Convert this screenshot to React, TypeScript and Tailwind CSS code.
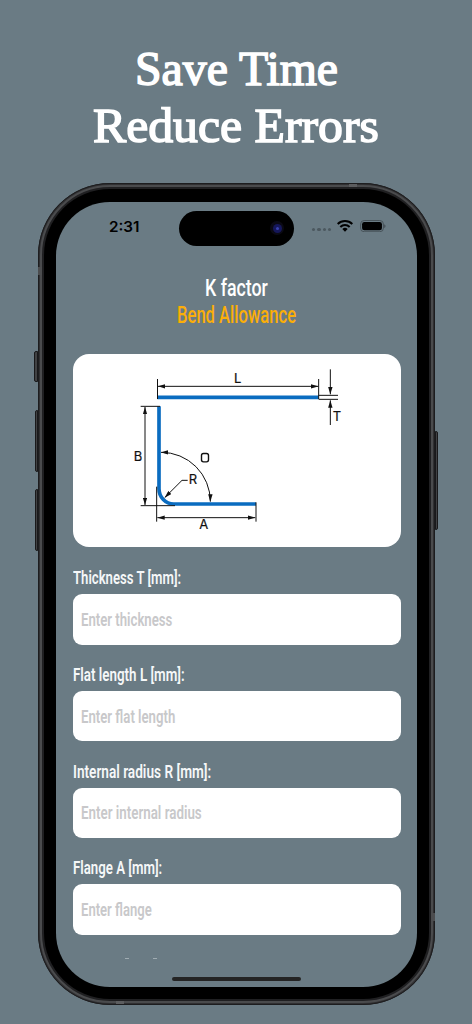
import React, { useLayoutEffect, useRef, useState } from 'react';

// Stretches or squeezes one line of text horizontally to the given width
const FitText: React.FC<{ width: number; className?: string; children: string }> = ({ width, className = '', children }) => {
    const ref = useRef<HTMLSpanElement>(null);
    const [scale, setScale] = useState(1);

    useLayoutEffect(() => {
        if (ref.current) setScale(width / ref.current.offsetWidth);
    }, [width, children]);

    return (
        <span className="block" style={{ width }}>
            <span ref={ref} className={`inline-block origin-left whitespace-nowrap ${className}`} style={{ transform: `scaleX(${scale})` }}>
                {children}
            </span>
        </span>
    );
};

const fields = [
    { label: 'Thickness T [mm]:', labelWidth: 108, placeholder: 'Enter thickness', placeholderWidth: 91.5 },
    { label: 'Flat length L [mm]:', labelWidth: 111.5, placeholder: 'Enter flat length', placeholderWidth: 94.5 },
    { label: 'Internal radius R [mm]:', labelWidth: 138.5, placeholder: 'Enter internal radius', placeholderWidth: 121 },
    { label: 'Flange A [mm]:', labelWidth: 89, placeholder: 'Enter flange', placeholderWidth: 70.5 },
];

const Field: React.FC<{ field: (typeof fields)[number] }> = ({ field }) => (
    <div className="h-[96.8px] shrink-0">
        <div className="h-[30px] pt-px text-[18px] leading-[26px] font-semibold text-[#f5f7f8]">
            <FitText width={field.labelWidth}>{field.label}</FitText>
        </div>
        <div className="flex h-[50.5px] items-center rounded-[9px] bg-white pl-[8.5px] text-[18px] font-semibold text-[#c8c8ca]">
            <FitText width={field.placeholderWidth}>{field.placeholder}</FitText>
        </div>
    </div>
);

const StatusBar: React.FC = () => (
    <div className="flex h-[54px] items-start pt-[9px]">
        <div className="ml-[52.500px] mt-[6px] w-[70.500px] font-['Inter',sans-serif] text-[15px] leading-5 font-semibold text-black">
            <FitText width={30.5}>2:31</FitText>
        </div>
        <div className="flex h-[35px] w-[115px] items-center justify-end rounded-full bg-black pr-[10px]">
            <div className="flex size-[14px] items-center justify-center rounded-full bg-[#0b0a14]">
                <div className="flex size-[9px] items-center justify-center rounded-full bg-[#15175a]">
                    <div className="size-[3px] rounded-full bg-[#3a41b0]" />
                </div>
            </div>
        </div>
        <div className="ml-[18px] mt-[17.500px] flex gap-[2px]">
            <div className="size-[3.3px] rounded-full bg-[#4c585f]" />
            <div className="size-[3.3px] rounded-full bg-[#4c585f]" />
            <div className="size-[3.3px] rounded-full bg-[#4c585f]" />
            <div className="size-[3.3px] rounded-full bg-[#4c585f]" />
        </div>
        <svg viewBox="0 0 48 36" className="ml-[6px] mt-[9px] h-[12px] w-[16px]">
            <path d="M2 12a32 32 0 0 1 44 0" fill="none" stroke="#000" strokeWidth="6" />
            <path d="M10 21a20 20 0 0 1 28 0" fill="none" stroke="#000" strokeWidth="6" />
            <path d="M16 27a12 12 0 0 1 16 0l-8 8z" fill="#000" />
        </svg>
        <svg viewBox="0 0 78 38" className="ml-[6.500px] mt-[9px] h-[12.6px] w-[26px]">
            <rect x="1.5" y="1.5" width="69" height="34" rx="11" fill="none" stroke="#414b51" strokeWidth="2.5" />
            <rect x="6" y="6" width="60" height="25" rx="7" fill="#000" />
            <path d="M73 13c5 2 5 9 0 11z" fill="#414b51" />
        </svg>
    </div>
);

const BendDiagram: React.FC = () => (
    <svg viewBox="0 0 720 540" className="ml-[47.500px] mt-[6px] h-[180px] w-[240px]" fill="none">
        <defs>
            <marker id="arrow" viewBox="0 0 20 12" refX="20" refY="6" markerWidth="22" markerHeight="14" markerUnits="userSpaceOnUse" orient="auto-start-reverse">
                <path d="M0 0l20 6l-20 6z" fill="#111" />
            </marker>
        </defs>
        <g stroke="#0a6cc0" strokeWidth="11">
            <path d="M112 112H596" />
            <path d="M117 139V386A44 46 0 0 0 161 432H408" />
        </g>
        <g stroke="#111" strokeWidth="3">
            <path d="M112.500 57V117M596 57V117" />
            <path d="M114 79H595" markerStart="url(#arrow)" markerEnd="url(#arrow)" />
            <path d="M596 106H654M596 118H654" />
            <path d="M631 195V121" markerEnd="url(#arrow)" />
            <path d="M631 28V103" markerEnd="url(#arrow)" />
            <path d="M62 139H120M62 437H165" />
            <path d="M75 141V435" markerStart="url(#arrow)" markerEnd="url(#arrow)" />
            <path d="M110 380V485M408 427V485" />
            <path d="M112 473H406" markerStart="url(#arrow)" markerEnd="url(#arrow)" />
            <path d="M123 277A147 147 0 0 1 271 425" markerStart="url(#arrow)" markerEnd="url(#arrow)" />
            <path d="M203 361H186L134 413" markerEnd="url(#arrow)" />
        </g>
        <g fill="#111" stroke="#111" strokeWidth="0.6" className="font-['Inter',sans-serif] text-[39px]" textAnchor="middle">
            <text x="353" y="69">L</text>
            <text x="651" y="183">T</text>
            <text x="54" y="302">B</text>
            <text x="219" y="373">R</text>
            <text x="251" y="508">A</text>
        </g>
        {/* angle symbol: a squarish O */}
        <rect x="244.500" y="280.500" width="21" height="25" rx="6" stroke="#111" strokeWidth="4.2" />
    </svg>
);

const Screen: React.FC = () => (
    <div className="flex h-[785px] w-[361px] flex-col overflow-hidden rounded-[54px] bg-[#6a7b84] font-['Roboto',sans-serif]">
        <StatusBar />
        <div className="flex h-[703px] flex-col px-[16.500px]">
            <div className="mt-[19px] flex h-[79px] shrink-0 flex-col items-center pt-[0.5px] text-[24px] leading-[26.5px] font-medium">
                <div className="text-white"><FitText width={63}>K factor</FitText></div>
                <div className="text-[#fbae08]"><FitText width={119}>Bend Allowance</FitText></div>
            </div>
            <div className="h-[193.5px] shrink-0 rounded-[16px] bg-white">
                <BendDiagram />
            </div>
            <div className="mt-[17px] flex flex-col">
                {fields.map((field) => (
                    <Field key={field.label} field={field} />
                ))}
            </div>
            {/* bracket tops of the next label, scrolled out of view */}
            <div className="mt-[6.500px] flex gap-[24px] pl-[52.500px]">
                <div className="h-px w-[4px] bg-[#a0acb2]" />
                <div className="h-px w-[4px] bg-[#a0acb2]" />
            </div>
        </div>
        <div className="mx-auto mt-[18px] h-[4px] w-[129px] shrink-0 rounded-full bg-[#242424]" />
    </div>
);

const Phone: React.FC = () => (
    <div className="relative ml-px h-[822px] w-[397px] rounded-[72px] bg-[#29292b]">
        <div className="absolute -left-[4px] top-[168px] h-[31px] w-[4px] rounded-l-[2px] border border-[#19191b] bg-[#414244]" />
        <div className="absolute -left-[3px] top-[227px] h-[62px] w-[3px] rounded-l-[2px] border border-[#19191b] bg-[#414244]" />
        <div className="absolute -left-[3px] top-[306px] h-[62px] w-[3px] rounded-l-[2px] border border-[#19191b] bg-[#414244]" />
        <div className="absolute -right-[3px] top-[248px] h-[99px] w-[3px] rounded-r-[2px] border border-[#19191b] bg-[#414244]" />
        {/* metal frame, then the black bezel */}
        <div className="h-full rounded-[72px] border border-[#1d1d1f] bg-[#303032] p-px">
            <div className="h-full rounded-[70px] border-2 border-[#4a4b4d] bg-[#202022] p-[2px]">
                <div className="flex h-full items-center justify-center rounded-[66px] bg-black">
                    <Screen />
                </div>
            </div>
        </div>
        {/* antenna bands */}
        <div className="absolute left-[311px] top-px h-[3px] w-[8px] bg-[#5c5d5f]" />
        <div className="absolute bottom-px left-[78px] h-[3px] w-[8px] bg-[#5c5d5f]" />
        <div className="absolute left-0 top-[84px] h-[8px] w-[4px] bg-[#4c4d4f]" />
        <div className="absolute bottom-[84px] right-0 h-[8px] w-[4px] bg-[#4c4d4f]" />
    </div>
);

const App: React.FC = () => {
    return (
        <div className="flex h-[1024px] w-[472px] flex-col items-center overflow-hidden bg-[#6a7b84]">
            <h1 className="flex h-[183px] shrink-0 flex-col items-center pt-[39.500px] font-['Liberation_Serif',serif] text-[48px] leading-[57px] text-white [-webkit-text-stroke:1.5px_white]">
                <FitText width={203}>Save Time</FitText>
                <FitText width={286}>Reduce Errors</FitText>
            </h1>
            <Phone />
        </div>
    );
};

export default App;
